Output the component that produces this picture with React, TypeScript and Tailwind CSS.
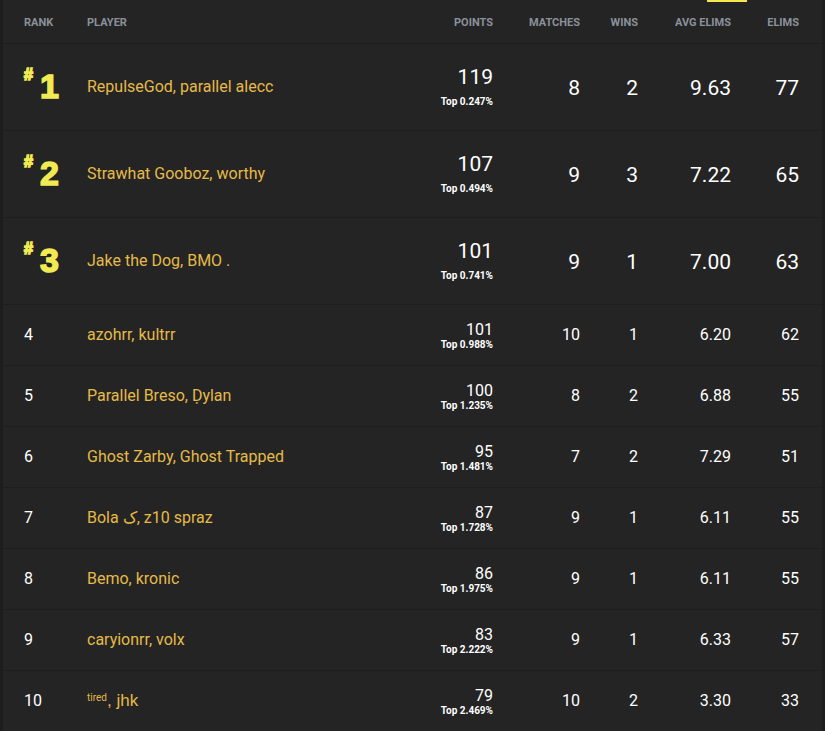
const rows = [
  { rank: 1, player: "RepulseGod, parallel alecc", points: 119, top: "0.247%", matches: 8, wins: 2, avg: "9.63", elims: 77 },
  { rank: 2, player: "Strawhat Gooboz, worthy", points: 107, top: "0.494%", matches: 9, wins: 3, avg: "7.22", elims: 65 },
  { rank: 3, player: "Jake the Dog, BMO .", points: 101, top: "0.741%", matches: 9, wins: 1, avg: "7.00", elims: 63 },
  { rank: 4, player: "azohrr, kultrr", points: 101, top: "0.988%", matches: 10, wins: 1, avg: "6.20", elims: 62 },
  { rank: 5, player: "Parallel Breso, Ḍylan", points: 100, top: "1.235%", matches: 8, wins: 2, avg: "6.88", elims: 55 },
  { rank: 6, player: "Ghost Zarby, Ghost Trapped", points: 95, top: "1.481%", matches: 7, wins: 2, avg: "7.29", elims: 51 },
  { rank: 7, player: "Bola ک, z10 spraz", points: 87, top: "1.728%", matches: 9, wins: 1, avg: "6.11", elims: 55 },
  { rank: 8, player: "Bemo, kronic", points: 86, top: "1.975%", matches: 9, wins: 1, avg: "6.11", elims: 55 },
  { rank: 9, player: "caryionrr, volx", points: 83, top: "2.222%", matches: 9, wins: 1, avg: "6.33", elims: 57 },
  { rank: 10, player: "", points: 79, top: "2.469%", matches: 10, wins: 2, avg: "3.30", elims: 33 },
];

const App = () => {
  return (
    <div className="w-[825px] h-[731px] overflow-hidden bg-[#242424] border-l-[3px] border-r-[3px] border-[#1d1d1d] font-['Roboto',sans-serif] relative">
      {/* active tab marker */}
      <div className="absolute top-0 left-[704px] w-[40px] h-[2px] bg-[#f4e64c]" />

      {/* Header */}
      <div className="flex items-center h-[44px] pt-[3px] border-b border-dotted border-[#181818] text-[11px] font-bold text-[#8b919b] uppercase">
        <div className="w-[84px] pl-[21px]">Rank</div>
        <div className="flex-1">Player</div>
        <div className="w-[100px] text-right">Points</div>
        <div className="w-[87px] text-right">Matches</div>
        <div className="w-[58px] text-right">Wins</div>
        <div className="w-[93px] text-right">Avg Elims</div>
        <div className="w-[68px] text-right">Elims</div>
        <div className="w-[23px]" />
      </div>

      {rows.map((r) => {
        const big = r.rank <= 3;
        const num = big ? "text-[21px] pt-[3px]" : "text-[16px]";
        return (
          <div
            key={r.rank}
            className={`flex items-center border-b border-dotted border-[#181818] ${big ? "h-[87px]" : "h-[61px]"}`}
          >
            <div className="w-[84px] pl-[21px]">
              {big ? (
                <div className="flex items-start font-['Liberation_Sans',sans-serif] font-bold text-[#f1ea52] [-webkit-text-stroke:1.5px_#f1ea52] mt-[-4px]">
                  <span className="text-[16px] leading-none">#</span>
                  <span className="text-[34px] leading-none ml-[7px] mt-[2px]">{r.rank}</span>
                </div>
              ) : (
                <span className="text-[16px] text-white">{r.rank}</span>
              )}
            </div>
            <div className="flex-1 text-[16px] text-[#e4ba48]">
              {r.rank === 10 ? (
                <span>
                  <sup className="text-[10px]">tired</sup>
                  <span className="font-['Liberation_Sans',sans-serif] text-[17px]">, jhk</span>
                </span>
              ) : (
                r.player
              )}
            </div>
            <div className="w-[100px] text-right text-white flex flex-col items-end">
              <span className={big ? "text-[21px] leading-[20px]" : "text-[16px] leading-[19px]"}>{r.points}</span>
              <span className={`text-[10px] font-bold leading-[12px] ${big ? "mt-[9px]" : ""}`}>Top {r.top}</span>
            </div>
            <div className={`w-[87px] text-right text-white ${num}`}>{r.matches}</div>
            <div className={`w-[58px] text-right text-white ${num}`}>{r.wins}</div>
            <div className={`w-[93px] text-right text-white ${num}`}>{r.avg}</div>
            <div className={`w-[68px] text-right text-white ${num}`}>{r.elims}</div>
            <div className="w-[23px]" />
          </div>
        );
      })}
    </div>
  );
};

export default App;
